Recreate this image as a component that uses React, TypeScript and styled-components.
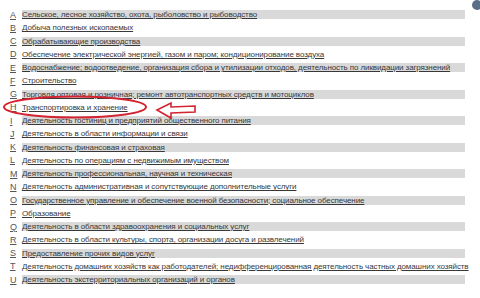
import styled, { createGlobalStyle } from 'styled-components';

const Global = createGlobalStyle`
  html, body {
    margin: 0;
    padding: 0;
    background: #fff;
  }
`;

const items: [string, string][] = [
  ['A', 'Сельское, лесное хозяйство, охота, рыболовство и рыбоводство'],
  ['B', 'Добыча полезных ископаемых'],
  ['C', 'Обрабатывающие производства'],
  ['D', 'Обеспечение электрической энергией, газом и паром; кондиционирование воздуха'],
  ['E', 'Водоснабжение; водоотведение, организация сбора и утилизации отходов, деятельность по ликвидации загрязнений'],
  ['F', 'Строительство'],
  ['G', 'Торговля оптовая и розничная; ремонт автотранспортных средств и мотоциклов'],
  ['H', 'Транспортировка и хранение'],
  ['I', 'Деятельность гостиниц и предприятий общественного питания'],
  ['J', 'Деятельность в области информации и связи'],
  ['K', 'Деятельность финансовая и страховая'],
  ['L', 'Деятельность по операциям с недвижимым имуществом'],
  ['M', 'Деятельность профессиональная, научная и техническая'],
  ['N', 'Деятельность административная и сопутствующие дополнительные услуги'],
  ['O', 'Государственное управление и обеспечение военной безопасности; социальное обеспечение'],
  ['P', 'Образование'],
  ['Q', 'Деятельность в области здравоохранения и социальных услуг'],
  ['R', 'Деятельность в области культуры, спорта, организации досуга и развлечений'],
  ['S', 'Предоставление прочих видов услуг'],
  ['T', 'Деятельность домашних хозяйств как работодателей; недифференцированная деятельность частных домашних хозяйств'],
  ['U', 'Деятельность экстерриториальных организаций и органов'],
];

const Page = styled.div`
  position: relative;
  width: 480px;
  height: 298px;
  overflow: hidden;
  font-family: 'Liberation Sans', Arial, sans-serif;
`;

const List = styled.div`
  display: flex;
  flex-direction: column;
  gap: 4.25px;
  padding: 10px 0 0 10px;
  width: 455px;
`;

const Row = styled.div`
  display: flex;
  height: 9px;
  align-items: center;
`;

const Letter = styled.span`
  width: 12px;
  flex: none;
  font-size: 9px;
  color: #555;
  text-decoration: underline;
`;

const Name = styled.span<{ $shaded: boolean }>`
  flex: 1;
  height: 9px;
  line-height: 9px;
  font-size: 8px;
  letter-spacing: -0.1px;
  color: #383838;
  text-decoration: underline;
  white-space: nowrap;
  background: ${(p) => (p.$shaded ? '#d9d9d9' : 'transparent')};
`;

const Marks = styled.svg`
  position: absolute;
  left: 0;
  top: 0;
  pointer-events: none;
`;

export default function App() {
  return (
    <Page>
      <Global />
      <List>
        {items.map(([l, t], i) => (
          <Row key={l}>
            <Letter>{l}</Letter>
            <Name $shaded={i % 2 === 0}>{t}</Name>
          </Row>
        ))}
      </List>
      <Marks width="480" height="298" viewBox="0 0 480 298">
        <ellipse cx="75" cy="107" rx="71" ry="10.5" fill="none" stroke="#d42431" strokeWidth="2" />
        <path
          d="M157 110 L171 103 L171 107 L195 106 L195 112 L171 113 L171 118 Z"
          fill="none"
          stroke="#d42431"
          strokeWidth="1.6"
          strokeLinejoin="miter"
        />
        <circle cx="477" cy="5" r="5" fill="#5b6e87" />
      </Marks>
    </Page>
  );
}
